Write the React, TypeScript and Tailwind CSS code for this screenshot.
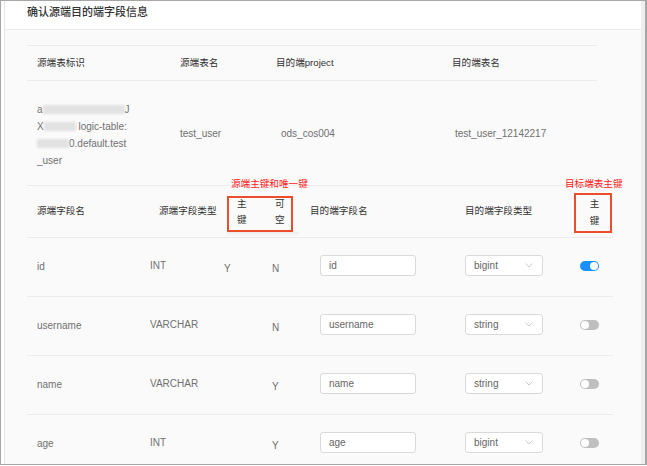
import React from "react";

const FONT = "font-['Liberation_Sans','Noto_Sans_CJK_SC',sans-serif]";

function Blur({ w }: { w: number }) {
  return (
    <span
      className="inline-block h-[9px] align-middle bg-[#e2e2e2] blur-[1px]"
      style={{ width: w }}
    />
  );
}

function Chevron() {
  return (
    <svg width="8" height="5" viewBox="0 0 8 5" className="shrink-0">
      <polyline points="0.5,0.5 4,4 7.5,0.5" fill="none" stroke="#c4c4c4" strokeWidth="0.9" />
    </svg>
  );
}

function Toggle({ on }: { on: boolean }) {
  return (
    <div
      className={`w-[19px] h-[10px] rounded-full flex items-center px-[1px] ${
        on ? "bg-[#1890ff] justify-end" : "bg-[#bfbfbf] justify-start"
      }`}
    >
      <div className="w-[8px] h-[8px] rounded-full bg-white" />
    </div>
  );
}

const rows = [
  { name: "id", type: "INT", pk: "Y", nul: "N", dst: "id", dtype: "bigint", on: true },
  { name: "username", type: "VARCHAR", pk: "", nul: "N", dst: "username", dtype: "string", on: false },
  { name: "name", type: "VARCHAR", pk: "", nul: "Y", dst: "name", dtype: "string", on: false },
  { name: "age", type: "INT", pk: "", nul: "Y", dst: "age", dtype: "bigint", on: false },
];

export default function App() {
  return (
    <div className={`w-[647px] h-[466px] overflow-hidden bg-white ${FONT}`}>
      <div className="w-[647px] h-[465px] border-t border-l border-b border-r-2 border-[#a6a6a6] flex overflow-hidden">
        <div className="w-[3px] shrink-0 bg-white" />
        <div className="flex-1 border-l border-[#e8e8e8] flex flex-col min-w-0">
          {/* header */}
          <div className="h-[29px] shrink-0 bg-white border-b border-[#ebebeb] pl-[22px] pt-[4px]">
            <div className="text-[11px] leading-[14px] text-[#333] font-medium">确认源端目的端字段信息</div>
          </div>
          {/* body */}
          <div className="flex-1 bg-[#fafafa] pl-[22px] pt-[15px]">
            {/* table 1 */}
            <div className="w-[570px]">
              <div className="grid grid-cols-[143px_100px_175px_152px] h-[36px] items-center border-t border-b border-[#ececec] text-[9.6px] text-[#333]">
                <div className="pl-[10px]">源端表标识</div>
                <div className="pl-[10px]">源端表名</div>
                <div className="pl-[6px]">目的端project</div>
                <div className="pl-[7px]">目的端表名</div>
              </div>
              <div className="grid grid-cols-[143px_100px_175px_152px] h-[104px] items-center text-[10px] text-[#707070]">
                <div className="pl-[10px] leading-[17px] pt-[3px]">
                  <div className="flex items-center">a<Blur w={82} />J</div>
                  <div className="flex items-center">X<Blur w={32} />&nbsp;logic-table:</div>
                  <div className="flex items-center"><Blur w={32} />0.default.test</div>
                  <div>_user</div>
                </div>
                <div className="pl-[10px]">test_user</div>
                <div className="pl-[11px]">ods_cos004</div>
                <div className="pl-[10px]">test_user_12142217</div>
              </div>
            </div>
            {/* table 2 */}
            <div className="w-[586px] relative">
              <div className="absolute left-[204px] top-[-7px] text-[9.6px] leading-[12px] text-[#ff2020] whitespace-nowrap z-10">源端主键和唯一键</div>
              <div className="absolute left-[538px] top-[-7px] text-[9.6px] leading-[12px] text-[#ff2020] whitespace-nowrap z-10">目标端表主键</div>
              <div className="relative grid grid-cols-[123px_72px_48px_40px_155px_110px_38px] h-[53px] items-center border-t border-b border-[#ececec] text-[9.6px] text-[#333]">
                <div className="absolute left-[200px] top-[46px] w-[72px] h-[4px] bg-gradient-to-b from-[#ececec] to-transparent" />
                <div className="absolute left-[200px] top-[10px] w-[66px] h-[36px] border-2 border-[#ec4d2c]" />
                <div className="absolute left-[547px] top-[7px] w-[38px] h-[40px] border-2 border-[#ec4d2c]" />
                <div className="pl-[10px]">源端字段名</div>
                <div className="pl-[9px]">源端字段类型</div>
                <div className="pl-[15px] leading-[16px] pt-[1px]">主<br />键</div>
                <div className="pl-[5px] leading-[16px] pt-[1px]">可<br />空</div>
                <div className="pl-0">目的端字段名</div>
                <div className="pl-0">目的端字段类型</div>
                <div className="text-center leading-[17px] pl-[1px]">主<br />键</div>
              </div>
              {rows.map((r) => (
                <div
                  key={r.name}
                  className="grid grid-cols-[123px_72px_48px_40px_155px_110px_38px] h-[59px] items-center border-b border-[#ececec] text-[10px] text-[#707070]"
                >
                  <div className="pl-[10px] pb-[2px]">{r.name}</div>
                  <div className="pb-[4px]">{r.type}</div>
                  <div className="pl-[2px] pt-[2px]">{r.pk}</div>
                  <div className="pl-[2px] pt-[2px]">{r.nul}</div>
                  <div className="pl-[10px] pb-[3px]">
                    <div className="w-[96px] h-[21px] bg-white border border-[#d9d9d9] rounded-[3px] flex items-center pl-[8px] text-[#666]">
                      {r.dst}
                    </div>
                  </div>
                  <div className="pb-[3px]">
                    <div className="w-[78px] h-[21px] bg-white border border-[#d9d9d9] rounded-[3px] flex items-center justify-between pl-[8px] pr-[9px] text-[#666]">
                      <span>{r.dtype}</span>
                      <Chevron />
                    </div>
                  </div>
                  <div className="pl-[5px] pb-[3px]">
                    <Toggle on={r.on} />
                  </div>
                </div>
              ))}
            </div>
          </div>
        </div>
        <div className="w-[4px] shrink-0 bg-[#efefef]" />
      </div>
    </div>
  );
}
